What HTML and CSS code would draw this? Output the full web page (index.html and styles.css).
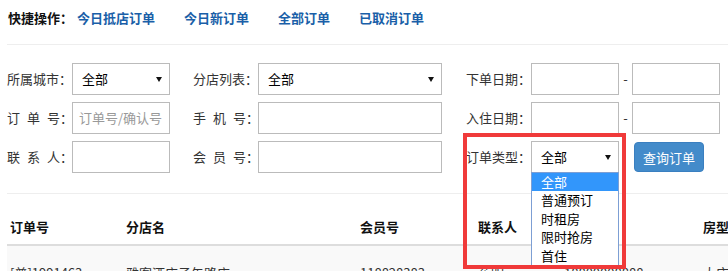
FILE: index.html
```html
<!DOCTYPE html>
<html lang="zh-CN">
<head>
<meta charset="utf-8">
<title>订单查询</title>
<link rel="stylesheet" href="styles.css">
</head>
<body>
<div class="page">
  <div class="quick">
    <span class="quick-title">快捷操作<span class="colon">：</span></span><a class="ql first" href="#">今日抵店订单</a><a class="ql" href="#">今日新订单</a><a class="ql" href="#">全部订单</a><a class="ql" href="#">已取消订单</a>
  </div>

  <div class="filters">
    <div class="row">
      <div class="field">
        <span class="lbl">所属城市<span class="colon">：</span></span>
        <div class="ctrl select c1">全部<i class="arrow"></i></div>
      </div>
      <div class="field f2">
        <span class="lbl">分店列表<span class="colon">：</span></span>
        <div class="ctrl select c2">全部<i class="arrow"></i></div>
      </div>
      <div class="field f3">
        <span class="lbl">下单日期<span class="colon">：</span></span>
        <div class="ctrl c3"></div>
        <span class="dash">-</span>
        <div class="ctrl c3"></div>
      </div>
    </div>
    <div class="row">
      <div class="field">
        <span class="lbl"><span class="sp">订单</span>号<span class="colon">：</span></span>
        <div class="ctrl input c1"><span class="ph">订单号/确认号</span></div>
      </div>
      <div class="field f2">
        <span class="lbl"><span class="sp">手机</span>号<span class="colon">：</span></span>
        <div class="ctrl c2"></div>
      </div>
      <div class="field f3">
        <span class="lbl">入住日期<span class="colon">：</span></span>
        <div class="ctrl c3"></div>
        <span class="dash">-</span>
        <div class="ctrl c3"></div>
      </div>
    </div>
    <div class="row">
      <div class="field">
        <span class="lbl"><span class="sp">联系</span>人<span class="colon">：</span></span>
        <div class="ctrl c1"></div>
      </div>
      <div class="field f2">
        <span class="lbl"><span class="sp">会员</span>号<span class="colon">：</span></span>
        <div class="ctrl c2"></div>
      </div>
      <div class="field f3">
        <span class="lbl">订单类型<span class="colon">：</span></span>
        <div class="ctrl select c3 open">全部<i class="arrow"></i>
          <ul class="menu">
            <li class="on">全部</li>
            <li>普通预订</li>
            <li>时租房</li>
            <li>限时抢房</li>
            <li>首住</li>
          </ul>
        </div>
        <button class="btn" type="button">查询订单</button>
      </div>
    </div>
  </div>

  <div class="sep"></div>

  <table class="orders">
    <colgroup>
      <col class="w1"><col class="w2"><col class="w3"><col class="w4"><col class="w5"><col class="w6">
    </colgroup>
    <thead>
      <tr><th>订单号</th><th>分店名</th><th>会员号</th><th>联系人</th><th></th><th>房型</th></tr>
    </thead>
    <tbody>
      <tr><td>[普]1991463</td><td>雅客酒店子午路店</td><td>118828383</td><td>蔡明</td><td>18800008888</td><td>大床房</td></tr>
    </tbody>
  </table>

  <div class="mark"></div>
</div>
</body>
</html>
```

FILE: styles.css
```css
* { box-sizing: border-box; margin: 0; padding: 0; }
html, body { width: 728px; height: 271px; overflow: hidden; }
body {
  font-family: "Noto Sans CJK SC", "Microsoft YaHei", sans-serif;
  font-size: 13px;
  line-height: 18px;
  color: #333;
  background: #fff;
}
.page { position: relative; padding-left: 7px; }

.colon { font-family: "Noto Sans CJK TC", "Noto Sans CJK SC", sans-serif; }

.quick {
  height: 45px;
  line-height: 36px;
  padding-left: 1px;
  border-bottom: 1px solid #eee;
  white-space: nowrap;
}
.quick-title { font-weight: bold; color: #111; }
.ql { color: #1a5fa8; text-decoration: none; margin-left: 29px; font-weight: bold; }
.ql.first { margin-left: 4px; }

.filters { margin-top: 18px; display: flex; flex-direction: column; gap: 7px; }
.row { display: flex; height: 32px; align-items: center; }
.field { display: flex; align-items: center; height: 32px; }
.f2 { margin-left: 23px; }
.f3 { margin-left: 24px; }
.lbl { width: 65px; white-space: nowrap; color: #333; }
.sp { letter-spacing: 7px; }

.ctrl {
  height: 32px;
  border: 1px solid #bbb;
  background: #fff;
  position: relative;
  display: flex;
  align-items: center;
  color: #000;
}
.c1 { width: 98px; }
.c2 { width: 184px; }
.c3 { width: 88px; }
.select { padding-left: 9px; }
.input { padding-left: 6px; }
.ph { color: #999; white-space: nowrap; }
.arrow {
  position: absolute;
  right: 7px;
  top: 13px;
  width: 0; height: 0;
  border-left: 3px solid transparent;
  border-right: 3px solid transparent;
  border-top: 5px solid #111;
}
.dash { width: 13px; text-align: center; color: #333; }

.menu {
  list-style: none;
  position: absolute;
  left: -1px;
  top: 30px;
  width: 88px;
  border: 1px solid #7d9fd4;
  background: #fff;
  z-index: 2;
}
.menu li { height: 18.4px; line-height: 18px; padding-left: 9px; color: #000; white-space: nowrap; }
.menu li.on { background: #3296fb; color: #fff; }

.btn {
  margin-left: 15px;
  width: 70px;
  height: 30px;
  border: 1px solid #3a7fc0;
  border-radius: 4px;
  background: #438bca;
  color: #fff;
  font-family: inherit;
  font-size: 13px;
}

.sep { margin-top: 20px; border-top: 1px solid #eee; }

.orders {
  margin-top: 16px;
  border-collapse: collapse;
  table-layout: fixed;
  width: 773px;
}
.w1 { width: 116px; } .w2 { width: 234px; } .w3 { width: 118px; }
.w4 { width: 86px; } .w5 { width: 139px; } .w6 { width: 80px; }
.orders th {
  text-align: left;
  font-weight: bold;
  color: #111;
  padding: 8px 3px;
  border-bottom: 2px solid #ddd;
  white-space: nowrap;
}
.orders td {
  padding: 18px 3px 8px;
  background: #f9f9f9;
  white-space: nowrap;
  overflow: hidden;
}

.mark {
  position: absolute;
  left: 463px;
  top: 133px;
  width: 163px;
  height: 136px;
  border: 4px solid #f03a3a;
  z-index: 3;
}
```
